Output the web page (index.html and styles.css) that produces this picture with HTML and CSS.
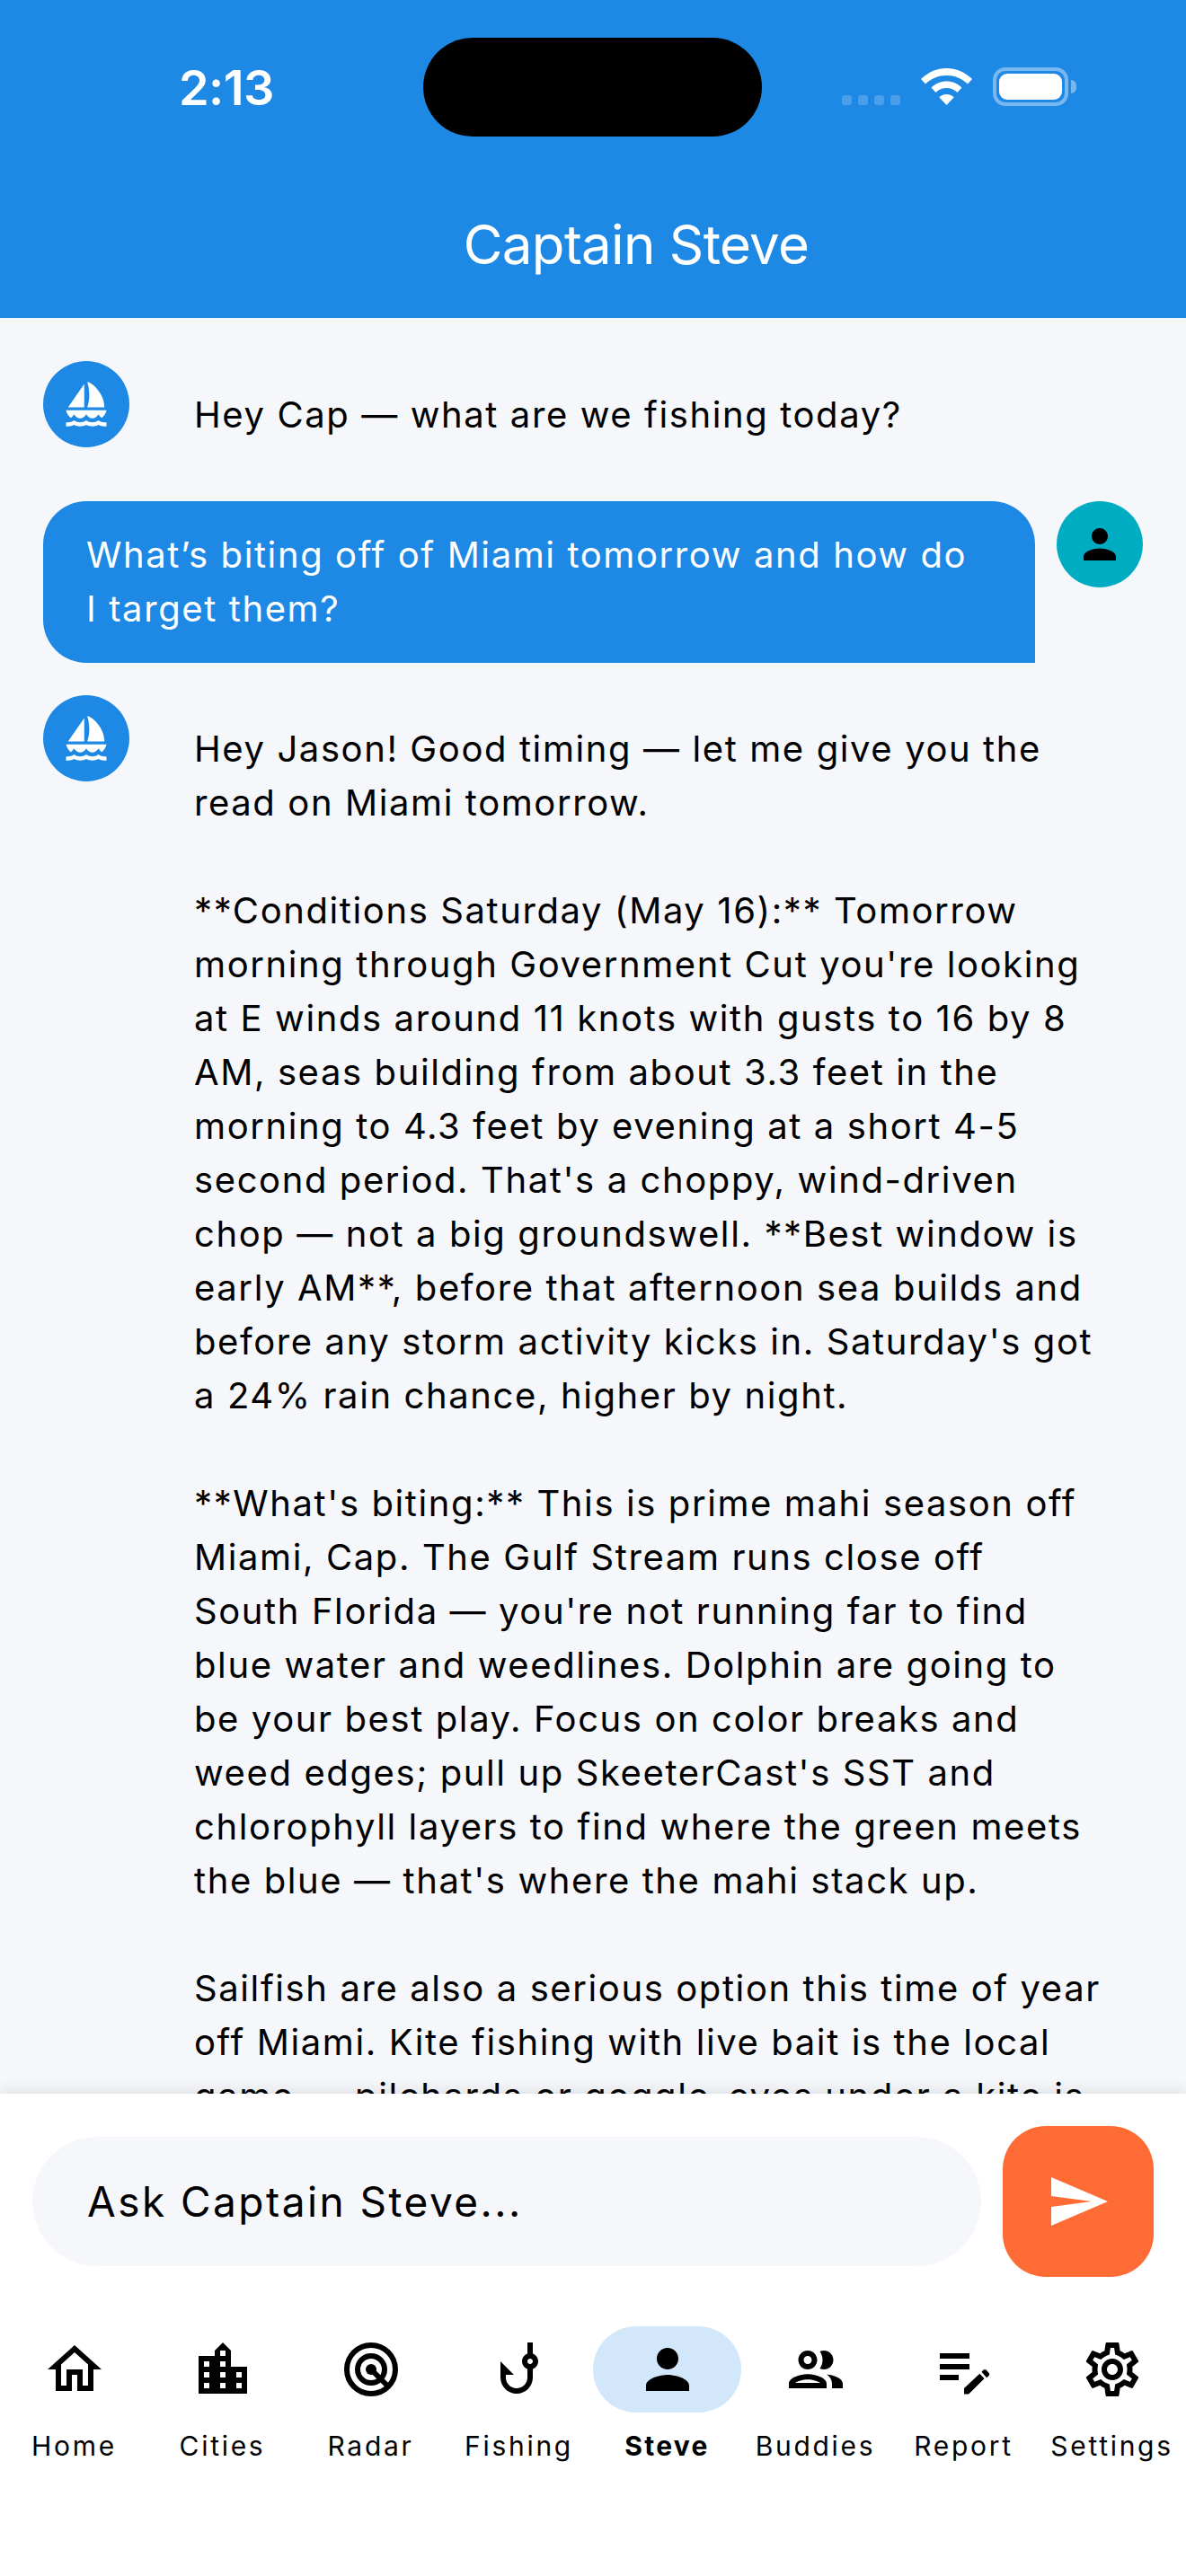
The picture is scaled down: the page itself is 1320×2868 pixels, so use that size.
FILE: index.html
```html
<!DOCTYPE html>
<html lang="en">
<head>
<meta charset="utf-8">
<title>Captain Steve</title>
<link rel="stylesheet" href="styles.css">
</head>
<body>
<div class="screen">
  <header class="header">
    <div class="statusbar">
      <span class="time">2:13</span>
      <div class="island"></div>
      <div class="status-icons">
        <div class="signal"><i></i><i></i><i></i><i></i></div>
        <svg class="wifi" viewBox="0 0 57 41"><path fill="#fff" d="M28.5 0C39 0 49 4.300 57 12L52 17.500C45.500 11.300 37.300 8 28.500 8S11.500 11.300 5 17.500L0 12C8 4.300 18 0 28.500 0ZM28.500 14.500C34.800 14.500 40.800 17 45.500 21.500L40.500 27C37.200 23.800 33 22 28.500 22S19.800 23.800 16.500 27L11.500 21.500C16.200 17 22.200 14.500 28.500 14.500ZM28.500 29C31.500 29 34.300 30.100 36.700 32.200L28.500 41L20.300 32.200C22.700 30.100 25.500 29 28.500 29Z"/></svg>
        <div class="battery"><div class="battery-fill"></div></div>
        <div class="battery-nub"></div>
      </div>
    </div>
    <h1 class="title">Captain Steve</h1>
  </header>

  <main class="chat">
    <div class="msg">
      <div class="avatar avatar-bot"><svg class="avatar-icon" viewBox="0 0 24 24"><use href="#sail"/></svg></div>
      <p class="bubble bubble-bot">Hey Cap — what are we fishing today?</p>
    </div>
    <div class="msg msg-user">
      <p class="bubble bubble-user">What’s biting off of Miami tomorrow and how do
I target them?</p>
      <div class="avatar avatar-user"><svg class="avatar-icon" viewBox="0 0 24 24"><use href="#person"/></svg></div>
    </div>
    <div class="msg">
      <div class="avatar avatar-bot"><svg class="avatar-icon" viewBox="0 0 24 24"><use href="#sail"/></svg></div>
      <p class="bubble bubble-bot">Hey Jason! Good timing — let me give you the
read on Miami tomorrow.

**Conditions Saturday (May 16):** Tomorrow
morning through Government Cut you're looking
at E winds around 11 knots with gusts to 16 by 8
AM, seas building from about 3.3 feet in the
morning to 4.3 feet by evening at a short 4-5
second period. That's a choppy, wind-driven
chop — not a big groundswell. **Best window is
early AM**, before that afternoon sea builds and
before any storm activity kicks in. Saturday's got
a 24% rain chance, higher by night.

**What's biting:** This is prime mahi season off
Miami, Cap. The Gulf Stream runs close off
South Florida — you're not running far to find
blue water and weedlines. Dolphin are going to
be your best play. Focus on color breaks and
weed edges; pull up SkeeterCast's SST and
chlorophyll layers to find where the green meets
the blue — that's where the mahi stack up.

Sailfish are also a serious option this time of year
off Miami. Kite fishing with live bait is the local
game — pilchards or goggle-eyes under a kite is</p>
    </div>
  </main>

  <footer class="panel">
    <div class="composer">
      <div class="input">Ask Captain Steve...</div>
      <button class="send"><svg class="send-icon" viewBox="0 0 24 24"><path d="M2.010 21 23 12 2.010 3 2 10l15 2-15 2z"/></svg></button>
    </div>
    <nav class="nav">
      <a class="nav-item"><span class="nav-pill"><svg viewBox="0 0 24 24"><path d="M12 5.690l5 4.500V18h-2v-6H9v6H7v-7.810l5-4.500M12 3 2 12h3v8h6v-6h2v6h6v-8h3L12 3z"/></svg></span><span class="nav-label">Home</span></a>
      <a class="nav-item"><span class="nav-pill"><svg viewBox="0 0 24 24"><path d="M15 11V5l-3-3-3 3v2H3v14h18V11h-6zm-8 8H5v-2h2v2zm0-4H5v-2h2v2zm0-4H5V9h2v2zm6 8h-2v-2h2v2zm0-4h-2v-2h2v2zm0-4h-2V9h2v2zm0-4h-2V5h2v2zm6 12h-2v-2h2v2zm0-4h-2v-2h2v2z"/></svg></span><span class="nav-label">Cities</span></a>
      <a class="nav-item"><span class="nav-pill"><svg viewBox="0 0 24 24"><circle class="ring" cx="12" cy="12" r="9"/><circle class="ring" cx="12" cy="12" r="5"/><circle cx="12" cy="12" r="2"/><line class="ring" x1="12" y1="12" x2="18.500" y2="18.500"/></svg></span><span class="nav-label">Radar</span></a>
      <a class="nav-item"><span class="nav-pill"><svg viewBox="0 0 24 24"><path d="M19 9c0-1.300-.84-2.400-2-2.820V2h-2v4.180C13.840 6.600 13 7.700 13 9s.84 2.400 2 2.820V15c0 2.210-1.790 4-4 4s-4-1.790-4-4v-1h3L5 9v6c0 3.310 2.690 6 6 6s6-2.690 6-6v-3.180C18.160 11.400 19 10.300 19 9zm-3 1c-.55 0-1-.45-1-1s.45-1 1-1 1 .45 1 1-.45 1-1 1z"/></svg></span><span class="nav-label">Fishing</span></a>
      <a class="nav-item nav-item-active"><span class="nav-pill"><svg viewBox="0 0 24 24"><path d="M12 12c2.210 0 4-1.790 4-4s-1.790-4-4-4-4 1.790-4 4 1.790 4 4 4zm0 2c-2.670 0-8 1.340-8 4v2h16v-2c0-2.660-5.330-4-8-4z"/></svg></span><span class="nav-label">Steve</span></a>
      <a class="nav-item"><span class="nav-pill"><svg viewBox="0 0 24 24"><path d="M9 13.750c-2.340 0-7 1.170-7 3.500V19h14v-1.750c0-2.330-4.660-3.500-7-3.500zM4.340 17c.84-.58 2.870-1.250 4.660-1.250s3.820.67 4.660 1.250H4.340zM9 12c1.930 0 3.500-1.570 3.500-3.500S10.930 5 9 5 5.500 6.570 5.500 8.500 7.070 12 9 12zm0-5c.83 0 1.500.67 1.500 1.500S9.830 10 9 10s-1.500-.67-1.500-1.500S8.170 7 9 7zm7.040 6.810c1.160.84 1.960 1.960 1.960 3.440V19h4v-1.750c0-2.020-3.500-3.170-5.960-3.440zM15 12c1.930 0 3.500-1.570 3.500-3.500S16.930 5 15 5c-.54 0-1.040.13-1.500.35.630.89 1 1.980 1 3.150s-.37 2.260-1 3.150c.46.22.96.35 1.500.35z"/></svg></span><span class="nav-label">Buddies</span></a>
      <a class="nav-item"><span class="nav-pill"><svg viewBox="0 0 24 24"><path d="M3 10h11v2H3zM3 6h11v2H3zM3 14h7v2H3zM12 21.200V19l5.800-5.400 1.700 1.800-5.800 5.800zM18.500 12.900l.7-.7c.3-.2.7-.2 1 0l1 1.100c.3.3.3.7 0 1l-.8.8z"/></svg></span><span class="nav-label">Report</span></a>
      <a class="nav-item"><span class="nav-pill"><svg viewBox="0 0 24 24"><path d="M19.430 12.980c.04-.32.07-.64.07-.98 0-.34-.03-.66-.07-.98l2.110-1.650c.19-.15.24-.42.12-.64l-2-3.460c-.09-.16-.26-.25-.44-.25-.06 0-.12.01-.17.03l-2.490 1c-.52-.4-1.080-.73-1.690-.98l-.38-2.650C14.460 2.180 14.250 2 14 2h-4c-.25 0-.46.18-.49.42l-.38 2.650c-.61.25-1.170.59-1.690.98l-2.490-1c-.06-.02-.12-.03-.18-.03-.17 0-.34.09-.43.25l-2 3.460c-.13.22-.07.49.12.64l2.110 1.650c-.04.32-.07.65-.07.98 0 .33.03.66.07.98l-2.110 1.650c-.19.15-.24.42-.12.64l2 3.460c.09.16.26.25.44.25.06 0 .12-.01.17-.03l2.490-1c.52.4 1.080.73 1.690.98l.38 2.650c.03.24.24.42.49.42h4c.25 0 .46-.18.49-.42l.38-2.650c.61-.25 1.170-.59 1.690-.98l2.490 1c.06.02.12.03.18.03.17 0 .34-.09.43-.25l2-3.460c.12-.22.07-.49-.12-.64l-2.110-1.650zm-1.980-1.710c.04.31.05.52.05.73 0 .21-.02.43-.05.73l-.14 1.130.89.7 1.080.84-.7 1.210-1.270-.51-1.040-.42-.9.68c-.43.32-.84.56-1.250.73l-1.060.43-.16 1.130-.2 1.350h-1.400l-.19-1.350-.16-1.130-1.060-.43c-.43-.18-.83-.41-1.230-.71l-.91-.7-1.060.43-1.270.51-.7-1.210 1.080-.84.89-.7-.14-1.130c-.03-.31-.05-.54-.05-.74s.02-.43.05-.73l.14-1.130-.89-.7-1.080-.84.7-1.210 1.270.51 1.040.42.9-.68c.43-.32.84-.56 1.250-.73l1.060-.43.16-1.130.2-1.350h1.390l.19 1.350.16 1.130 1.060.43c.43.18.83.41 1.230.71l.91.7 1.060-.43 1.270-.51.7 1.210-1.070.85-.89.7.14 1.130zM12 8c-2.210 0-4 1.790-4 4s1.790 4 4 4 4-1.790 4-4-1.790-4-4-4zm0 6c-1.100 0-2-.9-2-2s.9-2 2-2 2 .9 2 2-.9 2-2 2z"/></svg></span><span class="nav-label">Settings</span></a>
    </nav>
  </footer>
</div>
<svg class="defs" width="0" height="0">
  <symbol id="sail" viewBox="0 0 24 24"><path d="M11 13.500V2L3 13.500h8zm10 0C21 6.500 14.500 1 12.500 1c0 0 1 3 1 6.500s-1 6-1 6H21zM22 15H2c.31 1.530 1.160 2.840 2.330 3.730.65-.36 1.170-.93 1.670-1.730.8 1.270 1.800 2 3 2s2.200-.73 3-2c.8 1.270 1.800 2 3 2s2.200-.73 3-2c.5.8 1.020 1.370 1.670 1.730A6 6 0 0 0 22 15zM22 23v-2h-1c-1.040 0-2.080-.35-3-1-1.830 1.300-4.170 1.300-6 0-1.830 1.300-4.170 1.300-6 0-.91.65-1.960 1-3 1H2v2h1c1.030 0 2.050-.25 3-.75 1.890 1 4.110 1 6 0 1.890 1 4.110 1 6 0 .95.5 1.970.75 3 .75h1z"/></symbol>
  <symbol id="person" viewBox="0 0 24 24"><path d="M12 12c2.210 0 4-1.790 4-4s-1.790-4-4-4-4 1.790-4 4 1.790 4 4 4zm0 2c-2.670 0-8 1.340-8 4v2h16v-2c0-2.660-5.330-4-8-4z"/></symbol>
</svg>
</body>
</html>
```
FILE: styles.css
```css
* { box-sizing: border-box; }
html, body { margin: 0; padding: 0; }
body { font-family: Inter, "Liberation Sans", sans-serif; color: #000; background: #fff; }
.defs { position: absolute; }
.screen { width: 1320px; height: 2868px; display: flex; flex-direction: column; overflow: hidden; background: #f5f7fb; }

.header { height: 354px; flex: none; background: #1e88e5; color: #fff; display: flex; flex-direction: column; }
.statusbar { height: 232px; flex: none; position: relative; }
.time { position: absolute; left: 199px; top: 66px; font-size: 54px; line-height: 64px; font-weight: 600; letter-spacing: -.6px; }
.island { position: absolute; left: 471px; top: 42px; width: 377px; height: 110px; border-radius: 55px; background: #000; }
.status-icons { position: absolute; left: 0; top: 0; }
.signal { position: absolute; left: 937px; top: 106px; display: flex; gap: 7px; }
.signal i { width: 11px; height: 11px; border-radius: 3px; background: rgba(255, 255, 255, .2); }
.wifi { position: absolute; left: 1025px; top: 76px; width: 57px; height: 41px; }
.battery { position: absolute; left: 1105px; top: 75px; width: 84px; height: 43px; border: 4px solid rgba(255, 255, 255, .4); border-radius: 14px; padding: 3px; }
.battery-fill { width: 100%; height: 100%; background: #fff; border-radius: 9px; }
.battery-nub { position: absolute; left: 1192px; top: 89px; width: 6px; height: 15px; background: rgba(255, 255, 255, .4); border-radius: 0 6px 6px 0; }
.title { margin: 0; padding-left: 96px; text-align: center; font-size: 60px; line-height: 80px; font-weight: 400; letter-spacing: -.7px; }

.chat { flex: 1; min-height: 0; overflow: hidden; padding: 48px 48px 0; display: flex; flex-direction: column; gap: 36px; }
.msg { display: flex; gap: 24px; align-items: flex-start; }
.avatar { width: 96px; height: 96px; flex: none; border-radius: 50%; display: flex; align-items: center; justify-content: center; }
.avatar-bot { background: #1e88e5; color: #fff; }
.avatar-user { background: #00acc1; color: #000; }
.avatar-icon { width: 54px; height: 54px; fill: currentColor; }
.bubble { margin: 0; flex: 1; min-width: 0; font-size: 40px; line-height: 60px; letter-spacing: 1.6px; white-space: pre; }
.bubble-bot { padding: 30px 48px; }
.bubble-user { padding: 30px 48px; background: #1e88e5; color: #fff; border-radius: 48px 48px 0 48px; }

.panel { flex: none; height: 537px; background: #fff; box-shadow: 0 -3px 15px rgba(0, 0, 0, .1); position: relative; display: flex; flex-direction: column; }
.composer { display: flex; align-items: center; gap: 24px; padding: 36px 36px 0; }
.input { flex: 1; height: 144px; border-radius: 72px; background: #f5f7fb; padding: 0 61px; display: flex; align-items: center; font-size: 46px; letter-spacing: 2.45px; }
.send { width: 168px; height: 168px; flex: none; border: 0; padding: 0; border-radius: 48px; background: #ff6b35; display: flex; align-items: center; justify-content: center; }
.send-icon { width: 72px; height: 72px; fill: #fff; }

.nav { display: flex; margin-top: 55px; }
.nav-item { flex: 1; display: flex; flex-direction: column; align-items: center; }
.nav-pill { width: 165px; height: 96px; border-radius: 48px; display: flex; align-items: center; justify-content: center; }
.nav-pill svg { width: 72px; height: 72px; fill: #000; }
.nav-pill .ring { fill: none; stroke: #000; stroke-width: 2; }
.nav-label { margin-top: 16px; font-size: 30px; line-height: 42px; letter-spacing: 2.7px; white-space: nowrap; }
.nav-item-active .nav-pill { background: #d2e7fa; }
.nav-item-active .nav-label { font-weight: 700; letter-spacing: 2.3px; }
```
